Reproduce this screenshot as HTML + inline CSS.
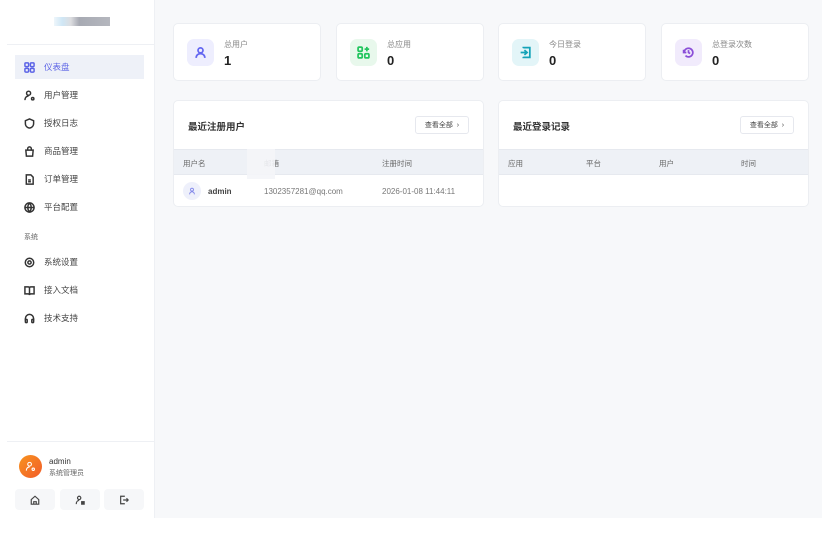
<!DOCTYPE html>
<html><head><meta charset="utf-8"><style>
*{box-sizing:border-box;margin:0;padding:0}
body{width:822px;height:545px;background:#fff;font-family:"Liberation Sans","Noto Sans CJK SC",sans-serif;position:relative;overflow:hidden;color:#333}
.side{position:absolute;left:0;top:0;width:155px;height:518px;background:#fff;border-right:1px solid #eef0f4}
.main{position:absolute;left:155px;top:0;width:667px;height:518px;background:#f7f8fa}
.abs{position:absolute}
.item{position:absolute;left:15px;width:129px;height:24px;font-size:8.5px;color:#444;display:flex;align-items:center;padding-left:9px;gap:9px}
.item svg{width:11px;height:11px;fill:none;stroke:#333;stroke-width:1.6}
.item.act{background:#eef1f8;color:#5b63e6}
.item.act svg{stroke:#5b63e6}
.card{position:absolute;top:23px;width:148px;height:58px;background:#fff;border:1px solid #eceef2;border-radius:5px}
.ib{position:absolute;left:13px;top:15px;width:27px;height:27px;border-radius:7px;display:flex;align-items:center;justify-content:center}
.ib svg{width:13px;height:13px;fill:none;stroke-width:1.6}
.lbl{position:absolute;left:50px;top:15px;font-size:8px;color:#888}
.num{position:absolute;left:50px;top:29px;font-size:13px;font-weight:bold;color:#222}
.panel{position:absolute;top:100px;width:311px;height:107px;background:#fff;border:1px solid #eceef2;border-radius:5px;overflow:hidden}
.pt{position:absolute;left:14px;top:18px;font-size:9.5px;font-weight:bold;color:#333}
.btn{position:absolute;right:14px;top:15px;width:54px;height:18px;border:1px solid #e6e8ee;border-radius:3px;font-size:7px;color:#444;display:flex;align-items:center;justify-content:center}
.th{position:absolute;left:0;top:48px;width:100%;height:26px;background:#eef1f6;border-top:1px solid #e6e9ef;border-bottom:1px solid #e6e9ef;font-size:7.5px;color:#666}
.th span{position:absolute;top:8px}
.sbtn{position:absolute;top:489px;width:40px;height:21px;background:#f6f7f9;border-radius:4px;display:flex;align-items:center;justify-content:center}
.sbtn svg{width:10px;height:10px;fill:none;stroke:#444;stroke-width:1.4}
</style></head><body>
<div class="side">
  <div class="abs" style="left:54px;top:17px;width:56px;height:9px;background:linear-gradient(90deg,#eef6fb 0,#cfe6f5 15%,#dcdde0 30%,#a7aab3 45%,#b5b7be 100%)"></div>
  <div class="abs" style="left:7px;top:44px;width:147px;height:1px;background:#eef0f4"></div>
  <div class="item act" style="top:55px"><svg viewBox="0 0 12 12"><rect x="1" y="1" width="4" height="4" rx="1"/><rect x="7" y="1" width="4" height="4" rx="1"/><rect x="1" y="7" width="4" height="4" rx="1"/><rect x="7" y="7" width="4" height="4" rx="1"/></svg>仪表盘</div>
  <div class="item" style="top:83px"><svg viewBox="0 0 12 12"><circle cx="5" cy="3.5" r="2.2"/><path d="M1 11c0-3 2-4.5 4-4.5"/><circle cx="9.5" cy="9.5" r="1.3"/></svg>用户管理</div>
  <div class="item" style="top:111px"><svg viewBox="0 0 12 12"><path d="M6 1l4.5 2v3c0 3-2.3 4.6-4.5 5-2.2-.4-4.5-2-4.5-5V3z"/></svg>授权日志</div>
  <div class="item" style="top:139px"><svg viewBox="0 0 12 12"><path d="M2 4.5h8l-.6 6.5H2.6z"/><path d="M4 4.5V3a2 2 0 014 0v1.5"/></svg>商品管理</div>
  <div class="item" style="top:167px"><svg viewBox="0 0 12 12"><path d="M2.5 1h5l2.5 2.5V11h-7.5z"/><path d="M4.5 6.5h3M4.5 8.5h3"/></svg>订单管理</div>
  <div class="item" style="top:195px"><svg viewBox="0 0 12 12"><circle cx="6" cy="6" r="5"/><path d="M1 6h10M6 1c-2.5 3-2.5 7 0 10M6 1c2.5 3 2.5 7 0 10"/></svg>平台配置</div>
  <div class="abs" style="left:24px;top:232px;font-size:7px;color:#666">系统</div>
  <div class="item" style="top:250px"><svg viewBox="0 0 12 12"><circle cx="6" cy="6" r="4.6"/><circle cx="6" cy="6" r="1.8"/></svg>系统设置</div>
  <div class="item" style="top:278px"><svg viewBox="0 0 12 12"><path d="M1 2h3.5c1 0 1.5.6 1.5 1.5V11c0-.8-.5-1.3-1.5-1.3H1zM11 2H7.5C6.5 2 6 2.6 6 3.5V11c0-.8.5-1.3 1.5-1.3H11z"/></svg>接入文档</div>
  <div class="item" style="top:306px"><svg viewBox="0 0 12 12"><path d="M1.5 8V6a4.5 4.5 0 019 0v2"/><rect x="1.5" y="7" width="2" height="3.5" rx=".8"/><rect x="8.5" y="7" width="2" height="3.5" rx=".8"/></svg>技术支持</div>
  <div class="abs" style="left:7px;top:441px;width:147px;height:1px;background:#eef0f4"></div>
  <div class="abs" style="left:19px;top:455px;width:23px;height:23px;border-radius:50%;background:linear-gradient(135deg,#f7931e,#f25c2a);display:flex;align-items:center;justify-content:center"><svg viewBox="0 0 12 12" width="11" height="11" fill="none" stroke="#fff" stroke-width="1.2"><circle cx="5" cy="3.5" r="2"/><path d="M1.5 10.5c0-2.5 1.5-4 3.5-4"/><circle cx="9" cy="9" r="1.3"/></svg></div>
  <div class="abs" style="left:49px;top:457px;font-size:8px;color:#333">admin</div>
  <div class="abs" style="left:49px;top:468px;font-size:7px;color:#666">系统管理员</div>
  <div class="sbtn" style="left:15px"><svg viewBox="0 0 12 12"><path d="M1.5 5.5L6 1.5l4.5 4V11h-9z"/><path d="M4.5 11V8h3v3"/></svg></div>
  <div class="sbtn" style="left:60px"><svg viewBox="0 0 12 12"><circle cx="5" cy="3.5" r="2"/><path d="M1.5 11c0-3 1.7-4.5 3.5-4.5"/><rect x="8" y="8" width="3" height="3" fill="#444"/></svg></div>
  <div class="sbtn" style="left:104px"><svg viewBox="0 0 12 12"><path d="M7 1.5H2v9h5"/><path d="M5 6h6M9 4l2 2-2 2"/></svg></div>
</div>
<div class="main">
  <div class="card" style="left:18px"><div class="ib" style="background:#eeeefe"><svg viewBox="0 0 12 12" stroke="#6366f1"><circle cx="6" cy="4" r="2.3"/><path d="M2 11c0-2.5 1.8-4 4-4s4 1.5 4 4"/></svg></div><div class="lbl">总用户</div><div class="num">1</div></div>
  <div class="card" style="left:181px"><div class="ib" style="background:#e8f8ec"><svg viewBox="0 0 12 12" stroke="#22c55e"><rect x="1" y="1" width="3.8" height="3.8" rx="1"/><rect x="1" y="7.2" width="3.8" height="3.8" rx="1"/><rect x="7.2" y="7.2" width="3.8" height="3.8" rx="1"/><path d="M9.1 .8v4.2M7 2.9h4.2"/></svg></div><div class="lbl">总应用</div><div class="num">0</div></div>
  <div class="card" style="left:343px"><div class="ib" style="background:#e3f5f8"><svg viewBox="0 0 12 12" stroke="#14a3b8"><path d="M4 2V1.5h6v9H4V10"/><path d="M1.5 6h6M5 3.8L7.5 6 5 8.2"/></svg></div><div class="lbl">今日登录</div><div class="num">0</div></div>
  <div class="card" style="left:506px"><div class="ib" style="background:#f1ebfc"><svg viewBox="0 0 12 12" stroke="#8b4fd8"><path d="M2 6a4 4 0 111.2 2.9"/><path d="M1.5 3.5V6H4"/><path d="M6 3.8V6l1.5 1"/></svg></div><div class="lbl">总登录次数</div><div class="num">0</div></div>

  <div class="panel" style="left:18px"><div class="pt">最近注册用户</div><div class="btn">查看全部 &nbsp;›</div>
    <div class="th"><span style="left:9px">用户名</span><span style="left:90px">邮箱</span><span style="left:208px">注册时间</span></div>
    <div class="abs" style="left:73px;top:48px;width:28px;height:30px;background:#f4f5f8;opacity:.9"></div>
    <div class="abs" style="left:9px;top:81px;width:18px;height:18px;border-radius:50%;background:#eef0fb;display:flex;align-items:center;justify-content:center"><svg viewBox="0 0 12 12" width="8" height="8" fill="none" stroke="#7b80e8" stroke-width="1.3"><circle cx="6" cy="4" r="2.2"/><path d="M2.5 11c0-2.3 1.5-3.7 3.5-3.7s3.5 1.4 3.5 3.7"/></svg></div>
    <div class="abs" style="left:34px;top:86px;font-size:8px;font-weight:bold;color:#444">admin</div>
    <div class="abs" style="left:90px;top:86px;font-size:8px;color:#777">1302357281@qq.com</div>
    <div class="abs" style="left:208px;top:86px;font-size:8px;color:#777">2026-01-08 11:44:11</div>
  </div>
  <div class="panel" style="left:343px"><div class="pt">最近登录记录</div><div class="btn">查看全部 &nbsp;›</div>
    <div class="th"><span style="left:9px">应用</span><span style="left:87px">平台</span><span style="left:160px">用户</span><span style="left:242px">时间</span></div>
  </div>
</div>
</body></html>
